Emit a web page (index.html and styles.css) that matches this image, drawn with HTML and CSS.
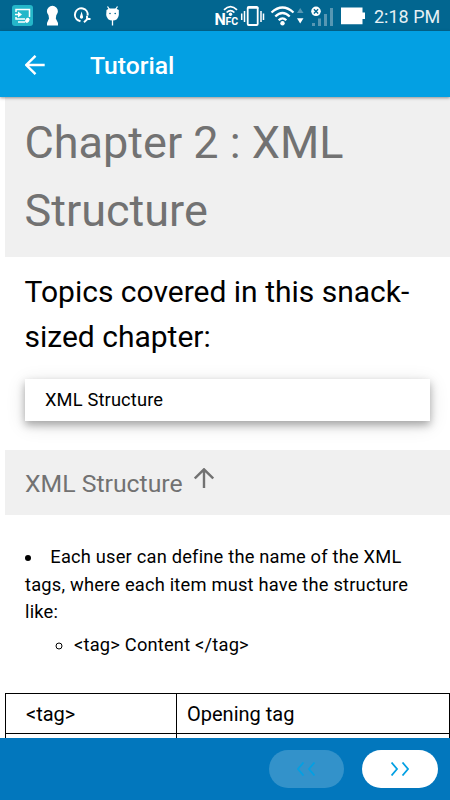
FILE: index.html
```html
<!DOCTYPE html>
<html lang="en">
<head>
    <meta charset="UTF-8">
    <meta name="viewport" content="width=device-width, initial-scale=1.0">
    <title>Tutorial</title>
    <link rel="stylesheet" href="styles.css">
</head>
<body>
    <div id="statusbar">
        <svg width="130" height="31" viewBox="0 0 130 31">
            <!-- screen share -->
            <rect x="12" y="5" width="21" height="21" rx="3" fill="#25b7c9"/>
            <path d="M16 12V9.500H29.500V17M16 17V19H25M18 22H25" fill="none" stroke="#fff" stroke-width="1.500"/>
            <path d="M15 13.800H18V11.500L22 14.500L18 17.500V15.300H15Z" fill="#fff"/>
            <ellipse cx="27.300" cy="20.300" rx="2" ry="2.700" fill="#fff" transform="rotate(35 27.300 20.300)"/>
            <!-- keyhole -->
            <path d="M48.500 15.200A5.500 5.500 0 1 1 56.300 15.200L55.800 18.500L58 23V25.500H47V23L49 18.500Z" fill="#fff"/>
            <!-- gauge -->
            <path d="M78.500 20.500A6.400 6.400 0 1 1 87.700 15.500M80.500 21.300L77.500 19.800" fill="none" stroke="#fff" stroke-width="2"/>
            <path d="M81.600 11.500L83 16.500A1.600 1.600 0 1 1 80 16.500Z" fill="#fff"/>
            <path d="M84 22.200L88.500 18M87 15.800V19H90.500" fill="none" stroke="#fff" stroke-width="1.900"/>
            <!-- debug robot -->
            <path d="M107.500 6.500L109.500 9.500M117.500 6.500L115.500 9.500M112.500 20V25.500" stroke="#fff" stroke-width="1.300"/>
            <path d="M106.500 10L109 8.500H116L118.800 10V15Q118 20.500 112.600 20.500Q107 20.500 106.200 15Z" fill="#fff"/>
            <circle cx="110" cy="13.500" r=".8" fill="#026690"/><circle cx="115.200" cy="13.500" r=".8" fill="#026690"/>
        </svg>
        <div class="status-right">
            <svg width="155" height="31" viewBox="212 0 155 31">
                <!-- nfc -->
                <text x="214.500" y="25" class="nfc-n">N</text>
                <text x="225.500" y="25.300" class="nfc-fc">FC</text>
                <path d="M224 9.800Q230.500 3.300 237 9.800M226.600 12.500Q230.500 8.700 234.400 12.500" fill="none" stroke="#fff" stroke-width="1.700"/>
                <circle cx="230.500" cy="14.300" r="1.700" fill="#fff"/>
                <!-- vibrate -->
                <rect x="247.700" y="7" width="10" height="18" rx="1" fill="none" stroke="#fff" stroke-width="1.800"/>
                <path d="M247 8H258.500M244.500 11V22M261 11V22M241.700 13.500V20M263.500 13.500V20" stroke="#fff" stroke-width="1.500"/>
                <!-- wifi -->
                <path d="M271.500 12.500Q282.500 2.500 293.500 12.500M275.300 16.500Q282.500 9.500 289.700 16.500M278.700 20.300Q282.500 16.500 286.300 20.300" fill="none" stroke="#fff" stroke-width="2.300"/>
                <circle cx="282.500" cy="23.300" r="2.200" fill="#fff"/>
                <path d="M297 13H303.500L300.200 8Z" fill="#5797b3"/>
                <path d="M297 18.300H303.500L300.200 23.500Z" fill="#fff"/>
                <!-- signal -->
                <path d="M312 23H315V26H312ZM318 18.500H321V26H318ZM324 14H327V26H324ZM330 8H333V26H330Z" fill="#5797b3"/>
                <circle cx="316" cy="11.300" r="4.800" fill="#fff"/>
                <path d="M313.900 9.200L318.100 13.400M318.100 9.200L313.900 13.400" stroke="#026690" stroke-width="1.400"/>
                <!-- battery -->
                <path d="M341 7.500H362.500V12.500H365V19H362.500V24.300H341Z" fill="#fff"/>
            </svg>
            <span class="clock">2:18 PM</span>
        </div>
    </div>
    <nav id="navbar">
        <svg class="back" width="20" height="20" viewBox="0 0 20 20">
            <path d="M19.700 10H1.500M10.500 .8L1.300 10L10.500 19.200" fill="none" stroke="#fff" stroke-width="2.400"/>
        </svg>
        <span>Tutorial</span>
    </nav>
    <main id="content">
        <h1>Chapter 2 : XML Structure</h1>
        <h2>Topics covered in this snack-sized chapter:</h2>
        <div class="card">XML Structure</div>
        <h3>
            <span>XML Structure</span>
            <svg class="up" width="20" height="20" viewBox="0 0 20 20">
                <path d="M10 20V1.500M.8 10.500L10 1.300L19.200 10.500" fill="none" stroke="#727272" stroke-width="2.400"/>
            </svg>
        </h3>
        <ul class="points">
            <li>Each user can define the name of the XML tags, where each item must have the structure like:
                <ul>
                    <li>&lt;tag&gt; Content &lt;/tag&gt;</li>
                </ul>
            </li>
        </ul>
        <table>
            <tr><td class="code">&lt;tag&gt;</td><td>Opening tag</td></tr>
            <tr><td class="code">&nbsp;</td><td>&nbsp;</td></tr>
        </table>
    </main>
    <footer id="pager">
        <button class="prev" disabled>
            <svg width="18" height="14" viewBox="0 0 18 14"><path d="M6.500 .5L1 7L6.500 13.500M17.500 .5L12 7L17.500 13.500"/></svg>
        </button>
        <button class="next">
            <svg width="18" height="14" viewBox="0 0 18 14"><path d="M.5 .5L6 7L.5 13.500M11.500 .5L17 7L11.500 13.500"/></svg>
        </button>
    </footer>
</body>
</html>
```
FILE: styles.css
```css
:root {
    --blue: #03a0e3;
    --blue-dark: #026690;
    --blue-footer: #0277bd;
    --gray: #f0f0f0;
    --text-gray: #727272;
}
* {
    box-sizing: border-box;
}
body {
    margin: 0;
    height: 100vh;
    overflow: hidden;
    display: flex;
    flex-direction: column;
    background-color: white;
    color: black;
    font-family: Roboto, sans-serif;
}
svg {
    display: block;
    flex: none;
}
#statusbar {
    flex: 0 0 31px;
    display: flex;
    justify-content: space-between;
    background-color: var(--blue-dark);
    color: #e6f0f4;
}
.status-right {
    display: flex;
    align-items: center;
    padding-right: 10px;
}
.clock {
    width: 66px;
    margin-left: 7px;
    padding-top: 2px;
    font-size: 18px;
    white-space: nowrap;
}
.nfc-n {
    font-size: 16px;
    font-weight: 700;
    fill: white;
}
.nfc-fc {
    font-size: 10.5px;
    font-weight: 700;
    fill: white;
}
#navbar {
    flex: 0 0 66px;
    display: flex;
    align-items: center;
    padding: 2px 25px 0;
    background-color: var(--blue);
    color: white;
    font-size: 24.7px;
    font-weight: 500;
    box-shadow: 0 1px 3px rgba(0, 0, 0, 0.4);
    z-index: 1;
}
.back {
    margin-right: 45px;
}
#content {
    flex: 1;
    min-height: 0;
    overflow: hidden;
    padding-left: 5px;
}
h1, h2, h3 {
    margin: 0;
    font-weight: 400;
}
h1 {
    height: 160px;
    padding: 12px 19.5px;
    background-color: var(--gray);
    color: var(--text-gray);
    font-size: 45px;
    line-height: 67.5px;
}
h2 {
    padding: 12px 19.5px 20px;
    font-size: 30px;
    line-height: 45px;
}
.card {
    height: 42px;
    margin: 0 20px 29px;
    padding: 0 20px;
    font-size: 18.3px;
    letter-spacing: 0.15px;
    line-height: 42px;
    box-shadow: 0 4px 8px rgba(0, 0, 0, 0.3), 0 4px 20px rgba(0, 0, 0, 0.12);
}
h3 {
    display: flex;
    height: 65px;
    padding: 0 20px;
    background-color: var(--gray);
    color: var(--text-gray);
    font-size: 24.8px;
    line-height: 68px;
}
.up {
    margin: 18px 0 0 11px;
}
.points {
    margin: 28px 20px 0;
    padding: 0;
    list-style: disc inside;
    font-size: 18.3px;
    letter-spacing: 0.2px;
    line-height: 27.5px;
}
.points ul {
    margin-top: 5px;
    padding-left: 49px;
    list-style: circle outside;
}
table {
    width: 445px;
    margin-top: 35px;
    border-collapse: collapse;
    font-size: 20px;
}
td {
    height: 40px;
    padding: 0 10px;
    border: 1px solid black;
}
td.code {
    width: 171px;
    padding-left: 20px;
}
#pager {
    flex: 0 0 62px;
    display: flex;
    justify-content: flex-end;
    gap: 18px;
    padding: 12px 12.5px 0 0;
    background-color: var(--blue-footer);
}
#pager button {
    display: flex;
    align-items: center;
    justify-content: center;
    width: 75.5px;
    height: 38px;
    padding: 0;
    border: none;
    border-radius: 19px;
    background-color: white;
}
#pager .prev {
    background-color: #3392ca;
}
#pager path {
    fill: none;
    stroke: var(--blue);
    stroke-width: 1.8;
}
```
